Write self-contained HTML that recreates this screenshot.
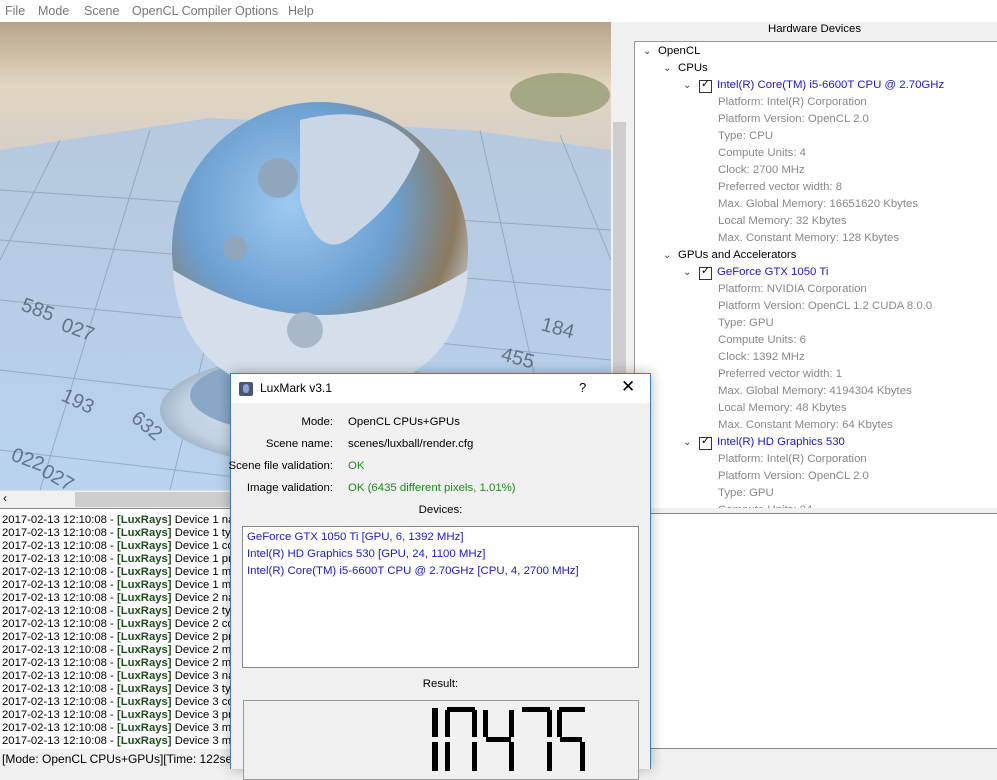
<!DOCTYPE html>
<html><head><meta charset="utf-8"><style>
*{margin:0;padding:0;box-sizing:border-box}
body{width:997px;height:769px;overflow:hidden;background:#f0f0f0;font-family:"Liberation Sans",sans-serif;font-size:11.4px;position:relative;color:#000}
.abs{position:absolute}
#menu{left:0;top:0;width:997px;height:22px;background:#fff}
#menu span{position:absolute;top:4px;color:#777;font-size:12.5px}
#render{left:0;top:22px;width:611px;height:468px;overflow:hidden;background:#aac4e2}
.vs{left:611px;top:22px;width:17px;height:468px;background:#f0f0f0}
.hs{left:0;top:490px;width:611px;height:17px;background:#f0f0f0;border-top:1px solid #ddd}
#hw{left:632px;top:22px;width:365px;height:488px;background:#f0f0f0}
#tree{left:634px;top:41px;width:363px;height:467px;background:#fff;border-top:1px solid #999;border-left:1px solid #999;overflow:hidden}
.t{position:absolute;white-space:nowrap;font-size:11.4px;line-height:17px}
.g{color:#888}.b{color:#1a1acc}
.cb{position:absolute;width:13px;height:13px;border:1px solid #333;background:#fff}
.ar{position:absolute;font-size:10px;color:#444}
#log{left:0;top:508px;width:632px;height:241px;background:#fff;overflow:hidden;border-top:1px solid #888}
.l{position:absolute;left:2px;white-space:nowrap;font-size:11.3px;line-height:13px}
.l b{color:#1e4d1e}
#rb{left:632px;top:513px;width:365px;height:236px;background:#fff;border-top:1px solid #888;border-bottom:1px solid #888}
#status{left:0;top:749px;width:632px;height:20px;background:#f0f0f0;font-size:12px;padding:3px 2px}
#dlg{left:230px;top:373px;width:421px;height:396px;background:#f0f0f0;border:1px solid #3c7fbf;border-bottom:none;box-shadow:0 0 12px rgba(0,0,0,.3)}
#dt{position:absolute;left:0;top:0;width:419px;height:29px;background:#fff}
.lb{position:absolute;right:317px;text-align:right;white-space:nowrap}
.vl{position:absolute;left:117px;white-space:nowrap}
.ok{color:#1c8a1c}
</style></head><body>
<div id="menu" class="abs"><span style="left:5px">File</span><span style="left:38px">Mode</span><span style="left:84px">Scene</span><span style="left:132px">OpenCL Compiler Options</span><span style="left:288px">Help</span></div>
<div id="render" class="abs">
<svg width="611" height="468" viewBox="0 22 611 468">
<defs>
<linearGradient id="sky" x1="0" y1="0" x2="0" y2="1"><stop offset="0" stop-color="#b7a58a"/><stop offset=".5" stop-color="#e3d6c2"/><stop offset="1" stop-color="#d5cfc6"/></linearGradient>
<linearGradient id="fl" x1="0" y1="0" x2="0" y2="1"><stop offset="0" stop-color="#b5c6d9"/><stop offset="1" stop-color="#b9d2ee"/></linearGradient>
<radialGradient id="sp" cx=".4" cy=".35" r=".7"><stop offset="0" stop-color="#9cc9ef"/><stop offset=".5" stop-color="#6c9fd0"/><stop offset=".8" stop-color="#8a7a60"/><stop offset="1" stop-color="#d8e0ea"/></radialGradient>
<radialGradient id="bs" cx=".5" cy=".5" r=".6"><stop offset="0" stop-color="#dfe8f2"/><stop offset=".7" stop-color="#c2d2e3"/><stop offset="1" stop-color="#7f94ab"/></radialGradient>
</defs>
<rect x="0" y="22" width="611" height="468" fill="url(#fl)"/>
<path d="M0 22H611V150L470 130 210 118 0 150Z" fill="url(#sky)"/>
<ellipse cx="560" cy="95" rx="50" ry="22" fill="#7f8b5c" opacity=".6"/>
<g stroke="#7d90a8" stroke-width="1" fill="none" opacity=".6">
<path d="M0 190 L611 230M0 240L611 290M0 300L611 360M0 370L611 440M0 450L611 520"/>
<path d="M60 140L0 260M150 130L40 490M260 125L170 490M380 125L380 490M480 130L560 490M560 135L611 260"/>
</g>
<g fill="#4e5d70" font-size="20" font-family="Liberation Sans" opacity=".8">
<text x="10" y="460" transform="rotate(20 10 460)">022</text><text x="40" y="475" transform="rotate(30 40 475)">027</text>
<text x="60" y="400" transform="rotate(25 60 400)">193</text><text x="130" y="420" transform="rotate(40 130 420)">632</text>
<text x="500" y="360" transform="rotate(15 500 360)">455</text><text x="540" y="330" transform="rotate(15 540 330)">184</text>
<text x="60" y="330" transform="rotate(20 60 330)">027</text><text x="20" y="310" transform="rotate(20 20 310)">585</text>
</g>
<ellipse cx="310" cy="410" rx="150" ry="55" fill="url(#bs)"/>
<ellipse cx="310" cy="395" rx="120" ry="40" fill="#8aa7c8"/>
<circle cx="320" cy="250" r="148" fill="url(#sp)"/>
<path d="M173 270 Q320 360 468 270 Q460 390 320 400 Q180 390 173 270Z" fill="#d4dfeb"/>
<path d="M300 120 Q380 100 420 150 Q400 200 360 230 Q320 270 300 200Z" fill="#c8d6e6"/>
<circle cx="278" cy="178" r="20" fill="#90a6bd"/><circle cx="235" cy="248" r="12" fill="#90a6bd"/><circle cx="305" cy="330" r="18" fill="#a8b8c8"/>
</svg>
</div>
<div class="abs vs"><div class="abs" style="left:2px;top:100px;width:13px;height:300px;background:#cdcdcd"></div></div>
<div class="abs hs"><div class="abs" style="left:75px;top:1px;width:200px;height:15px;background:#cdcdcd"></div><span class="abs" style="left:3px;top:0;font-size:12px">‹</span></div>

<div id="hw" class="abs"><div class="abs" style="left:0;top:1px;width:365px;text-align:center;font-size:11.4px">Hardware Devices</div></div>
<div id="tree" class="abs">
<span class="ar" style="left:8px;top:4px">&#8964;</span><div class="t" style="left:23px;top:1px">OpenCL</div>
<span class="ar" style="left:28px;top:21px">&#8964;</span><div class="t" style="left:43px;top:18px">CPUs</div>
<span class="ar" style="left:48px;top:38px">&#8964;</span><div class="cb" style="left:64px;top:38px"></div><span class="abs" style="left:66px;top:35px;font-size:11px">✓</span><div class="t b" style="left:82px;top:35px">Intel(R) Core(TM) i5-6600T CPU @ 2.70GHz</div>
<div class="t g" style="left:83px;top:52px">Platform: Intel(R) Corporation</div>
<div class="t g" style="left:83px;top:69px">Platform Version: OpenCL 2.0</div>
<div class="t g" style="left:83px;top:86px">Type: CPU</div>
<div class="t g" style="left:83px;top:103px">Compute Units: 4</div>
<div class="t g" style="left:83px;top:120px">Clock: 2700 MHz</div>
<div class="t g" style="left:83px;top:137px">Preferred vector width: 8</div>
<div class="t g" style="left:83px;top:154px">Max. Global Memory: 16651620 Kbytes</div>
<div class="t g" style="left:83px;top:171px">Local Memory: 32 Kbytes</div>
<div class="t g" style="left:83px;top:188px">Max. Constant Memory: 128 Kbytes</div>
<span class="ar" style="left:28px;top:208px">&#8964;</span><div class="t" style="left:43px;top:205px">GPUs and Accelerators</div>
<span class="ar" style="left:48px;top:225px">&#8964;</span><div class="cb" style="left:64px;top:225px"></div><span class="abs" style="left:66px;top:222px;font-size:11px">✓</span><div class="t b" style="left:82px;top:222px">GeForce GTX 1050 Ti</div>
<div class="t g" style="left:83px;top:239px">Platform: NVIDIA Corporation</div>
<div class="t g" style="left:83px;top:256px">Platform Version: OpenCL 1.2 CUDA 8.0.0</div>
<div class="t g" style="left:83px;top:273px">Type: GPU</div>
<div class="t g" style="left:83px;top:290px">Compute Units: 6</div>
<div class="t g" style="left:83px;top:307px">Clock: 1392 MHz</div>
<div class="t g" style="left:83px;top:324px">Preferred vector width: 1</div>
<div class="t g" style="left:83px;top:341px">Max. Global Memory: 4194304 Kbytes</div>
<div class="t g" style="left:83px;top:358px">Local Memory: 48 Kbytes</div>
<div class="t g" style="left:83px;top:375px">Max. Constant Memory: 64 Kbytes</div>
<span class="ar" style="left:48px;top:395px">&#8964;</span><div class="cb" style="left:64px;top:395px"></div><span class="abs" style="left:66px;top:392px;font-size:11px">✓</span><div class="t b" style="left:82px;top:392px">Intel(R) HD Graphics 530</div>
<div class="t g" style="left:83px;top:409px">Platform: Intel(R) Corporation</div>
<div class="t g" style="left:83px;top:426px">Platform Version: OpenCL 2.0</div>
<div class="t g" style="left:83px;top:443px">Type: GPU</div>
<div class="t g" style="left:83px;top:460px">Compute Units: 24</div>
</div>
<div id="rb" class="abs"></div>

<div id="log" class="abs">
<div class="l" style="top:5px">2017-02-13 12:10:08 - <b>[LuxRays]</b> Device 1 name</div>
<div class="l" style="top:18px">2017-02-13 12:10:08 - <b>[LuxRays]</b> Device 1 type</div>
<div class="l" style="top:31px">2017-02-13 12:10:08 - <b>[LuxRays]</b> Device 1 compute</div>
<div class="l" style="top:44px">2017-02-13 12:10:08 - <b>[LuxRays]</b> Device 1 preferred</div>
<div class="l" style="top:57px">2017-02-13 12:10:08 - <b>[LuxRays]</b> Device 1 max</div>
<div class="l" style="top:70px">2017-02-13 12:10:08 - <b>[LuxRays]</b> Device 1 max</div>
<div class="l" style="top:83px">2017-02-13 12:10:08 - <b>[LuxRays]</b> Device 2 name</div>
<div class="l" style="top:96px">2017-02-13 12:10:08 - <b>[LuxRays]</b> Device 2 type</div>
<div class="l" style="top:109px">2017-02-13 12:10:08 - <b>[LuxRays]</b> Device 2 compute</div>
<div class="l" style="top:122px">2017-02-13 12:10:08 - <b>[LuxRays]</b> Device 2 preferred</div>
<div class="l" style="top:135px">2017-02-13 12:10:08 - <b>[LuxRays]</b> Device 2 max</div>
<div class="l" style="top:148px">2017-02-13 12:10:08 - <b>[LuxRays]</b> Device 2 max</div>
<div class="l" style="top:161px">2017-02-13 12:10:08 - <b>[LuxRays]</b> Device 3 name</div>
<div class="l" style="top:174px">2017-02-13 12:10:08 - <b>[LuxRays]</b> Device 3 type</div>
<div class="l" style="top:187px">2017-02-13 12:10:08 - <b>[LuxRays]</b> Device 3 compute</div>
<div class="l" style="top:200px">2017-02-13 12:10:08 - <b>[LuxRays]</b> Device 3 preferred</div>
<div class="l" style="top:213px">2017-02-13 12:10:08 - <b>[LuxRays]</b> Device 3 max</div>
<div class="l" style="top:226px">2017-02-13 12:10:08 - <b>[LuxRays]</b> Device 3 max</div>
</div>
<div id="status" class="abs">[Mode: OpenCL CPUs+GPUs][Time: 122secs]</div>

<div id="dlg" class="abs">
<div id="dt"><div class="abs" style="left:8px;top:8px;width:14px;height:14px;background:#4a5670;border-radius:2px"></div><div class="abs" style="left:12px;top:10px;width:6px;height:9px;background:#8fa2d8;border-radius:3px"></div><div class="abs" style="left:29px;top:7px;font-size:12px">LuxMark v3.1</div><div class="abs" style="left:348px;top:6px;font-size:13px">?</div><div class="abs" style="left:390px;top:3px;font-size:17px">✕</div></div>
<div class="lb" style="top:42px">Mode:</div><div class="vl" style="top:42px">OpenCL CPUs+GPUs</div>
<div class="lb" style="top:64px">Scene name:</div><div class="vl" style="top:64px">scenes/luxball/render.cfg</div>
<div class="lb" style="top:86px">Scene file validation:</div><div class="vl ok" style="top:86px">OK</div>
<div class="lb" style="top:108px">Image validation:</div><div class="vl ok" style="top:108px">OK (6435 different pixels, 1.01%)</div>
<div class="abs" style="left:0;width:419px;text-align:center;top:130px">Devices:</div>
<div class="abs" style="left:11px;top:152px;width:397px;height:142px;background:#fff;border:1px solid #888">
<div class="t b" style="left:4px;top:2px">GeForce GTX 1050 Ti [GPU, 6, 1392 MHz]</div>
<div class="t b" style="left:4px;top:19px">Intel(R) HD Graphics 530 [GPU, 24, 1100 MHz]</div>
<div class="t b" style="left:4px;top:36px">Intel(R) Core(TM) i5-6600T CPU @ 2.70GHz [CPU, 4, 2700 MHz]</div>
</div>
<div class="abs" style="left:0;width:419px;text-align:center;top:304px">Result:</div>
<div class="abs" style="left:12px;top:326px;width:396px;height:80px;border:1px solid #999;background:#f0f0f0;overflow:hidden">
<svg width="396" height="80" style="position:absolute;left:0;top:0">
<g fill="#000" transform="translate(-242,-700)">
<rect x="430" y="707" width="6" height="29"/><rect x="430" y="741" width="6" height="29"/>
<rect x="445" y="706" width="28" height="5"/><rect x="443" y="709" width="5" height="27"/><rect x="470" y="709" width="5" height="27"/><rect x="443" y="741" width="5" height="29"/><rect x="470" y="741" width="5" height="29"/>
<rect x="481" y="709" width="5" height="27"/><rect x="507" y="709" width="5" height="27"/><rect x="484" y="736" width="25" height="5"/><rect x="507" y="741" width="5" height="29"/>
<rect x="520" y="706" width="28" height="5"/><rect x="545" y="709" width="5" height="27"/><rect x="545" y="741" width="5" height="29"/>
<rect x="557" y="706" width="26" height="5"/><rect x="555" y="709" width="5" height="27"/><rect x="558" y="736" width="22" height="5"/><rect x="578" y="741" width="5" height="29"/>
</g></svg>
</div>
</div>
</body></html>
